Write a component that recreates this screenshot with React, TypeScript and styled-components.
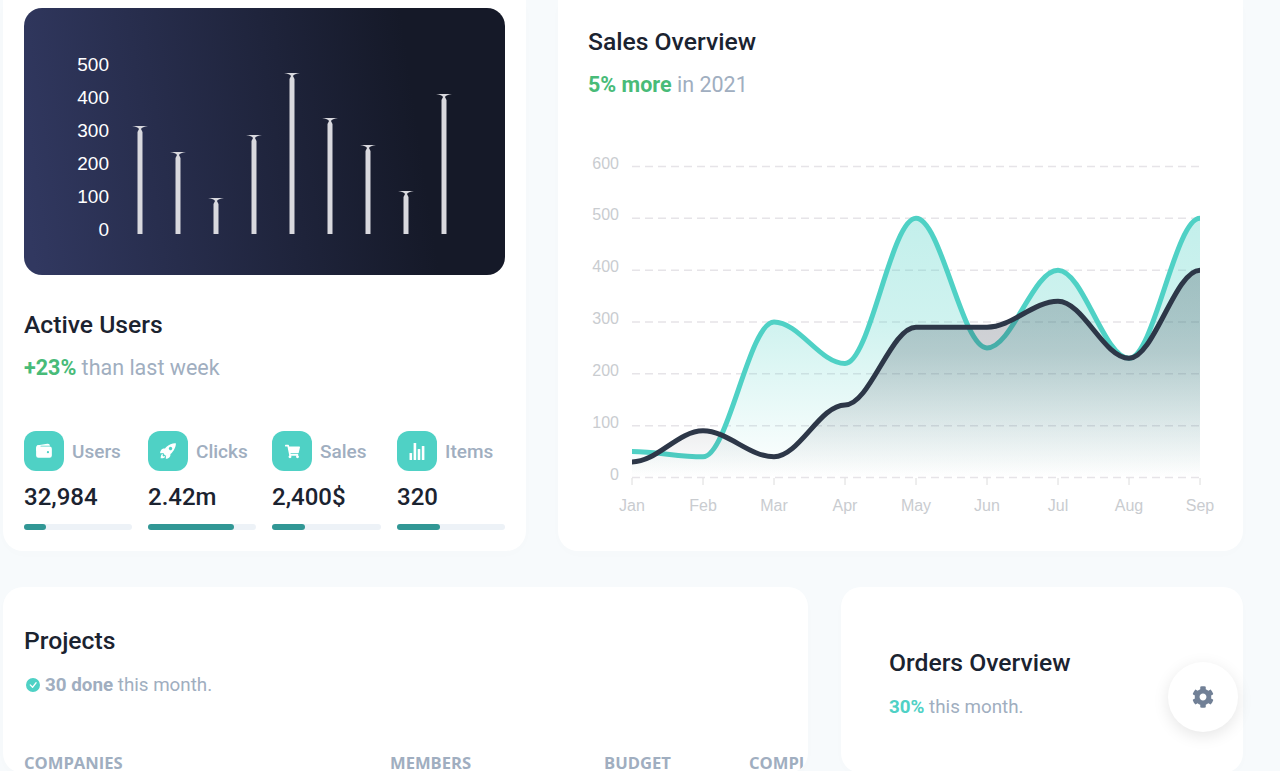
import React from 'react';
import styled, { createGlobalStyle } from 'styled-components';
import { IoRocketSharp, IoWallet } from 'react-icons/io5';
import { FaCog, FaShoppingCart } from 'react-icons/fa';
import { BsCheckCircleFill } from 'react-icons/bs';

const months = ['Jan', 'Feb', 'Mar', 'Apr', 'May', 'Jun', 'Jul', 'Aug', 'Sep'];
const tealData = [50, 40, 300, 220, 500, 250, 400, 230, 500];
const darkData = [30, 90, 40, 140, 290, 290, 340, 230, 400];
const barTops = [126, 152, 198, 135, 73, 118, 145, 191, 94];
const stats = [
  { label: 'Users', value: '32,984', fill: 20, icon: <IoWallet size={18} /> },
  { label: 'Clicks', value: '2.42m', fill: 80, icon: <IoRocketSharp size={18} /> },
  { label: 'Sales', value: '2,400$', fill: 30, icon: <FaShoppingCart size={15} /> },
  { label: 'Items', value: '320', fill: 40, icon: <StatsIcon /> },
];

const xAt = (i: number) => 632 + i * 71;
const yAt = (v: number) => 477.5 - v * 0.5183;

const linePath = (data: number[]) =>
  data.reduce((d, v, i) => {
    if (i === 0) return `M${xAt(0)} ${yAt(v)}`;
    const x0 = xAt(i - 1);
    const x1 = xAt(i);
    return `${d} C${x0 + 25} ${yAt(data[i - 1])} ${x1 - 25} ${yAt(v)} ${x1} ${yAt(v)}`;
  }, '');

const areaPath = (data: number[]) => `${linePath(data)} L1200 477.5 L632 477.5 Z`;

function StatsIcon() {
  return (
    <svg width="16" height="18" viewBox="0 0 16 18" fill="currentColor">
      <rect x="0.5" y="11" width="2.6" height="7" rx="0.6" />
      <rect x="4.6" y="1" width="2.6" height="17" rx="0.6" />
      <rect x="8.7" y="7" width="2.6" height="11" rx="0.6" />
      <rect x="12.8" y="4" width="2.6" height="14" rx="0.6" />
    </svg>
  );
}

const BarChart = () => (
  <svg width="481" height="267" viewBox="24 8 481 267" style={{ display: 'block' }}>
    {[500, 400, 300, 200, 100, 0].map((label, i) => (
      <AxisLabel key={label} x="109" y={71 + i * 33} textAnchor="end">
        {label}
      </AxisLabel>
    ))}
    {barTops.map((top, i) => {
      const c = 140 + i * 38;
      return (
        <path
          key={c}
          fill="#d9d9de"
          d={`M${c - 8} ${top} Q${c - 2} ${top + 1} ${c - 1} ${top + 3} L${c - 2.5} ${top + 6} L${c - 2.5} 234 L${c + 2.5} 234 L${c + 2.5} ${top + 6} L${c + 1} ${top + 3} Q${c + 2} ${top + 1} ${c + 8} ${top} Z`}
        />
      );
    })}
  </svg>
);

const SalesChart = () => (
  <svg width="685" height="400" viewBox="558 140 685 400" style={{ display: 'block' }}>
    <defs>
      <linearGradient id="tealFill" x1="0" y1="0" x2="0" y2="1">
        <stop offset="0" stopColor="#4fd1c5" stopOpacity="0.34" />
        <stop offset="0.4" stopColor="#4fd1c5" stopOpacity="0.27" />
        <stop offset="1" stopColor="#4fd1c5" stopOpacity="0" />
      </linearGradient>
      <linearGradient id="darkFill" x1="0" y1="0" x2="0" y2="1">
        <stop offset="0" stopColor="#2d3748" stopOpacity="0.27" />
        <stop offset="0.4" stopColor="#2d3748" stopOpacity="0.22" />
        <stop offset="1" stopColor="#2d3748" stopOpacity="0" />
      </linearGradient>
      <clipPath id="plot">
        <rect x="632" y="150" width="568" height="340" />
      </clipPath>
    </defs>
    {[600, 500, 400, 300, 200, 100, 0].map((label) => (
      <g key={label}>
        <line x1="632" x2="1200" y1={yAt(label)} y2={yAt(label)} stroke="#e6e4e8" strokeWidth="1.5" strokeDasharray="8 5" />
        <TickLabel x="619" y={yAt(label) + 2} textAnchor="end">
          {label}
        </TickLabel>
      </g>
    ))}
    {months.map((month, i) => (
      <g key={month}>
        <line x1={xAt(i)} x2={xAt(i)} y1="478" y2="485" stroke="#dcdcdc" strokeWidth="1" />
        <TickLabel x={xAt(i)} y="511" textAnchor="middle">
          {month}
        </TickLabel>
      </g>
    ))}
    <g clipPath="url(#plot)" fill="none" strokeWidth="5">
      <path d={areaPath(tealData)} fill="url(#tealFill)" />
      <path d={linePath(tealData)} stroke="#4fd1c5" />
      <path d={areaPath(darkData)} fill="url(#darkFill)" />
      <path d={linePath(darkData)} stroke="#2d3748" />
    </g>
  </svg>
);

const App = () => (
  <Page>
    <GlobalStyle />
    <TopRow>
      <ActiveUsersCard>
        <ChartPanel>
          <BarChart />
        </ChartPanel>
        <ActiveTitle>Active Users</ActiveTitle>
        <Subtitle>
          <Growth>+23%</Growth> than last week
        </Subtitle>
        <StatGrid>
          {stats.map((stat) => (
            <div key={stat.label}>
              <StatHead>
                <StatIcon>{stat.icon}</StatIcon>
                <StatLabel>{stat.label}</StatLabel>
              </StatHead>
              <StatValue>{stat.value}</StatValue>
              <Track>
                <Fill style={{ width: `${stat.fill}%` }} />
              </Track>
            </div>
          ))}
        </StatGrid>
      </ActiveUsersCard>
      <SalesCard>
        <SalesHeader>
          <Title>Sales Overview</Title>
          <Subtitle>
            <Growth>5% more</Growth> in 2021
          </Subtitle>
        </SalesHeader>
        <SalesChart />
      </SalesCard>
    </TopRow>
    <BottomRow>
      <ProjectsCard>
        <Title>Projects</Title>
        <SmallSubtitle>
          <BsCheckCircleFill size={14} color="#4fd1c5" />
          <span>
            <strong>30 done</strong> this month.
          </span>
        </SmallSubtitle>
        <TableHead>
          <span>Companies</span>
          <span>Members</span>
          <span>Budget</span>
          <span>Completion</span>
        </TableHead>
      </ProjectsCard>
      <OrdersCard>
        <Title>Orders Overview</Title>
        <OrdersSubtitle>
          <Percent>30%</Percent> this month.
        </OrdersSubtitle>
      </OrdersCard>
    </BottomRow>
    <SettingsButton>
      <FaCog size={22} />
    </SettingsButton>
  </Page>
);

const GlobalStyle = createGlobalStyle`
  html, body {
    margin: 0;
    background: #f7fafc;
    overflow: hidden;
  }

  * {
    box-sizing: border-box;
  }
`;

const Page = styled.div`
  display: flex;
  flex-direction: column;
  gap: 36px;
  width: 1280px;
  height: 771px;
  padding-left: 3px;
  overflow: hidden;
  font-family: Roboto, sans-serif;
`;

const TopRow = styled.div`
  display: flex;
  gap: 32px;
  height: 551px;
  flex: none;
`;

const BottomRow = styled.div`
  display: flex;
  gap: 33px;
  flex: 1;
`;

const Card = styled.section`
  background: #fff;
  border-radius: 20px;
  box-shadow: 0 3px 14px rgba(0, 0, 0, 0.01);
`;

const ActiveUsersCard = styled(Card)`
  width: 523px;
  padding: 8px 21px 0;
  border-radius: 0 0 20px 20px;
`;

const SalesCard = styled(Card)`
  width: 685px;
  border-radius: 0 0 20px 20px;
`;

const SalesHeader = styled.div`
  height: 140px;
  padding: 26px 30px 0;
`;

const ProjectsCard = styled(Card)`
  width: 805px;
  padding: 38px 0 0 21px;
  overflow: hidden;
`;

const OrdersCard = styled(Card)`
  width: 402px;
  padding: 60px 48px 0;
`;

const ChartPanel = styled.div`
  height: 267px;
  border-radius: 18px;
  overflow: hidden;
  background: linear-gradient(81.62deg, #313860 2.25%, #151928 79.87%);
`;

const AxisLabel = styled.text`
  font-family: 'Liberation Sans', sans-serif;
  font-size: 19px;
  fill: #fff;
`;

const TickLabel = styled.text`
  font-family: 'Liberation Sans', sans-serif;
  font-size: 16px;
  fill: #c9ccd0;
`;

const Title = styled.h2`
  margin: 0;
  font-size: 24.7px;
  line-height: 32px;
  font-weight: 500;
  color: #1b2330;
`;

const ActiveTitle = styled(Title)`
  margin-top: 34px;
`;

const Subtitle = styled.p`
  margin: 13px 0 0;
  font-size: 21.5px;
  line-height: 28px;
  color: #a0aec0;
`;

const SmallSubtitle = styled.p`
  display: flex;
  align-items: center;
  gap: 5px;
  margin: 16px 0 0;
  padding-left: 2px;
  font-size: 18.8px;
  line-height: 24px;
  color: #a0aec0;

  strong {
    font-weight: 700;
  }
`;

const OrdersSubtitle = styled.p`
  margin: 16px 0 0;
  font-size: 18.8px;
  line-height: 24px;
  color: #a0aec0;
`;

const Percent = styled.span`
  font-weight: 700;
  color: #4fd1c5;
`;

const Growth = styled.span`
  font-weight: 700;
  color: #48bb78;
`;

const StatGrid = styled.div`
  display: grid;
  grid-template-columns: 108px 108px 109px 108px;
  gap: 16px;
  margin-top: 49px;
`;

const StatHead = styled.div`
  display: flex;
  align-items: center;
  gap: 8px;
`;

const StatIcon = styled.div`
  display: flex;
  align-items: center;
  justify-content: center;
  width: 40px;
  height: 40px;
  border-radius: 12px;
  background: #4fd1c5;
  color: #fff;
`;

const StatLabel = styled.span`
  font-size: 19px;
  font-weight: 500;
  color: #a0aec0;
`;

const StatValue = styled.div`
  margin-top: 11px;
  font-size: 24px;
  line-height: 30px;
  font-weight: 500;
  color: #1b2330;
`;

const Track = styled.div`
  height: 6px;
  margin-top: 12px;
  border-radius: 3px;
  background: #edf2f7;
`;

const Fill = styled.div`
  height: 100%;
  border-radius: 3px;
  background: #319795;
`;

const TableHead = styled.div`
  display: grid;
  grid-template-columns: 366px 214px 145px 200px;
  margin-top: 56px;
  font-family: 'Open Sans', sans-serif;
  font-size: 16.6px;
  line-height: 20px;
  font-weight: 700;
  text-transform: uppercase;
  color: #a0aec0;
`;

const SettingsButton = styled.button`
  position: fixed;
  right: 42px;
  bottom: 39px;
  display: flex;
  align-items: center;
  justify-content: center;
  width: 70px;
  height: 70px;
  border: none;
  border-radius: 50%;
  background: #fff;
  color: #718096;
  box-shadow: 0 4px 16px rgba(0, 0, 0, 0.1);
`;

export default App;
